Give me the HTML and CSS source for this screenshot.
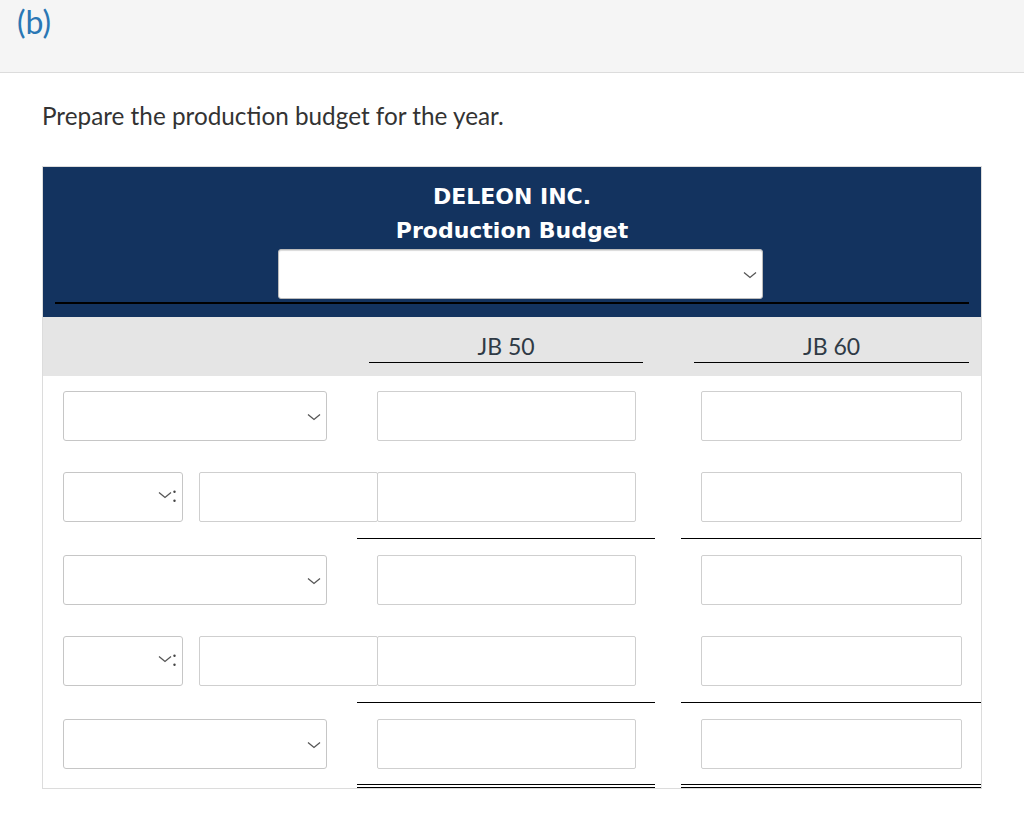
FILE: index.html
```html
<!DOCTYPE html>
<html>
<head>
<meta charset="utf-8">
<link rel="stylesheet" href="styles.css">
</head>
<body>
<div class="topbar"><span class="part">(b)</span></div>
<p class="prompt">Prepare the production budget for the year.</p>

<div class="table">
  <div class="head">
    <div class="title">DELEON INC.</div>
    <div class="title">Production Budget</div>
    <div class="period-wrap">
      <div class="select period">
        <svg class="chev" width="14" height="8" viewBox="0 0 14 8"><path d="M1 1.5 L7 6.5 L13 1.5" fill="none" stroke="#555" stroke-width="1.3"/></svg>
      </div>
    </div>
  </div>

  <div class="grid colhead">
    <div class="cell"></div>
    <div class="cell b"><div class="colname">JB 50</div></div>
    <div class="cell gap"></div>
    <div class="cell c"><div class="colname">JB 60</div></div>
  </div>

  <div class="grid row first">
    <div class="cell a"><div class="select wide"><svg class="chev" width="14" height="8" viewBox="0 0 14 8"><path d="M1 1.5 L7 6.5 L13 1.5" fill="none" stroke="#555" stroke-width="1.3"/></svg></div></div>
    <div class="cell b"><div class="input"></div></div>
    <div class="cell gap"></div>
    <div class="cell c"><div class="input"></div></div>
  </div>

  <div class="grid row">
    <div class="cell a"><div class="select small"><svg class="chev2" width="20" height="14" viewBox="0 0 20 14"><path d="M1 2.5 L7 7.5 L13 2.5" fill="none" stroke="#555" stroke-width="1.3"/><circle cx="16.5" cy="1.8" r="1.2" fill="#444"/><circle cx="16.5" cy="10.8" r="1.2" fill="#444"/></svg></div><div class="input mid"></div></div>
    <div class="cell b line"><div class="input"></div></div>
    <div class="cell gap"></div>
    <div class="cell c line"><div class="input"></div></div>
  </div>

  <div class="grid row after-line">
    <div class="cell a"><div class="select wide"><svg class="chev" width="14" height="8" viewBox="0 0 14 8"><path d="M1 1.5 L7 6.5 L13 1.5" fill="none" stroke="#555" stroke-width="1.3"/></svg></div></div>
    <div class="cell b"><div class="input"></div></div>
    <div class="cell gap"></div>
    <div class="cell c"><div class="input"></div></div>
  </div>

  <div class="grid row">
    <div class="cell a"><div class="select small"><svg class="chev2" width="20" height="14" viewBox="0 0 20 14"><path d="M1 2.5 L7 7.5 L13 2.5" fill="none" stroke="#555" stroke-width="1.3"/><circle cx="16.5" cy="1.8" r="1.2" fill="#444"/><circle cx="16.5" cy="10.8" r="1.2" fill="#444"/></svg></div><div class="input mid"></div></div>
    <div class="cell b line"><div class="input"></div></div>
    <div class="cell gap"></div>
    <div class="cell c line"><div class="input"></div></div>
  </div>

  <div class="grid row after-line last">
    <div class="cell a"><div class="select wide"><svg class="chev" width="14" height="8" viewBox="0 0 14 8"><path d="M1 1.5 L7 6.5 L13 1.5" fill="none" stroke="#555" stroke-width="1.3"/></svg></div></div>
    <div class="cell b dline"><div class="input"></div></div>
    <div class="cell gap"></div>
    <div class="cell c dline"><div class="input"></div></div>
  </div>
</div>
</body>
</html>
```

FILE: styles.css
```css
* { box-sizing: border-box; }
body {
  margin: 0;
  font-family: Lato, "Open Sans", Arial, sans-serif;
  background: #fff;
  color: #333;
}
.topbar {
  height: 73px;
  background: #f5f5f5;
  border-bottom: 1px solid #dcdcdc;
  padding: 3px 0 0 17px;
}
.part {
  font-size: 32px;
  line-height: 38px;
  color: #2a77b4;
}
.prompt {
  margin: 29px 0 0 42px;
  font-size: 24.3px;
  line-height: 28px;
  color: #333;
}
.table {
  margin: 36px 0 0 42px;
  width: 940px;
  border: 1px solid #dcdcdc;
}
.head {
  background: #13335f;
  padding: 13px 12px 13px;
}
.title {
  text-align: center;
  color: #fff;
  font-family: "DejaVu Sans", Verdana, sans-serif;
  font-weight: bold;
  font-size: 22px;
  line-height: 34px;
}
.period-wrap {
  margin-top: 1px;
  padding-bottom: 3px;
  border-bottom: 2px solid #000;
}
.select {
  background: #fff;
  border: 1px solid #c6c6c6;
  border-radius: 3px;
  height: 50px;
  display: flex;
  align-items: center;
  justify-content: flex-end;
  padding-right: 5px;
  flex-shrink: 0;
}
.period {
  margin-left: 223px;
  width: 485px;
  border-color: #bbb;
  box-shadow: inset 0 1px 1px rgba(0,0,0,0.15);
}
.chev { display: block; margin-top: 2px; }
.chev2 { display: block; margin-right: -1px; }
.grid {
  display: grid;
  grid-template-columns: 314px 298px 26px 300px;
}
.colhead {
  background: #e5e5e5;
  padding: 16px 0 13px;
}
.colhead .b { padding: 0 12px; }
.colhead .c { padding: 0 12px 0 13px; }
.colname {
  text-align: center;
  font-size: 23px;
  line-height: 26px;
  padding-bottom: 3px;
  border-bottom: 1px solid #000;
  color: #2f3a45;
}
.row .cell {
  padding-top: 15px;
  padding-bottom: 16px;
}
.row.after-line .cell { padding-top: 16px; }
.row .a {
  padding-left: 20px;
  display: flex;
  gap: 16px;
}
.row .b { padding-left: 20px; padding-right: 19px; }
.row .c { padding-left: 20px; padding-right: 19px; }
.wide { width: 264px; }
.small { width: 120px; }
.input {
  height: 50px;
  border: 1px solid #cfcfcf;
  border-radius: 2px;
  background: #fff;
}
.input.mid {
  width: 179px;
  flex-shrink: 0;
}
.line { border-bottom: 1px solid #000; }
.dline { border-bottom: 4px double #000; }
.row.last .cell { padding-bottom: 15px; }
```
